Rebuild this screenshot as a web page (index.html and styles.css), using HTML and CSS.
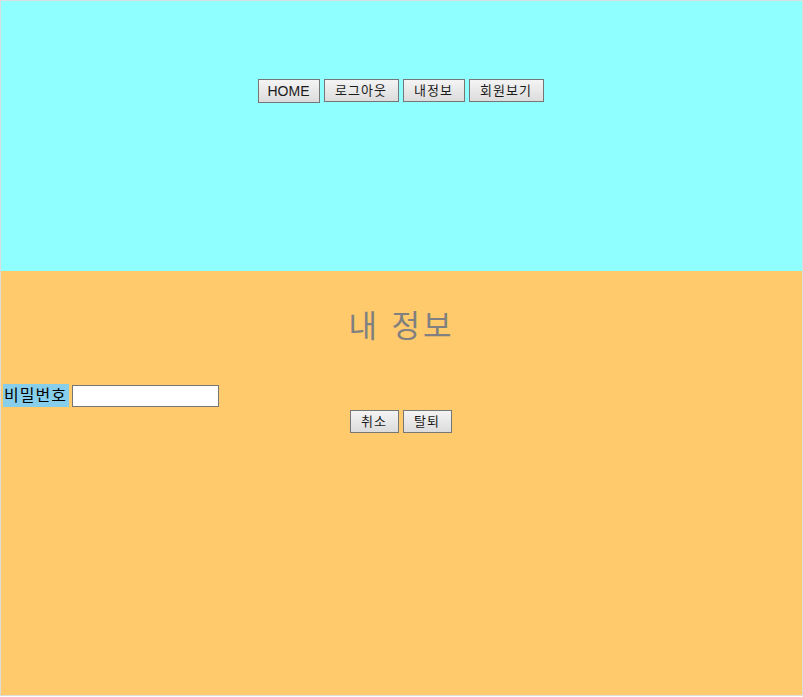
FILE: index.html
```html
<!DOCTYPE html>
<html lang="ko">
<head>
<meta charset="utf-8">
<link rel="stylesheet" href="styles.css">
</head>
<body>
<div class="frame">
  <header class="top">
    <nav class="menu">
      <button class="btn w3 home">HOME</button>
      <button class="btn w4">로그아웃</button>
      <button class="btn w3">내정보</button>
      <button class="btn w4">회원보기</button>
    </nav>
  </header>
  <main class="content">
    <h1 class="title">내 정보</h1>
    <div class="field">
      <label class="label">비밀번호</label>
      <input class="input" type="password">
    </div>
    <div class="actions">
      <button class="btn w2">취소</button>
      <button class="btn w2">탈퇴</button>
    </div>
  </main>
</div>
</body>
</html>
```
FILE: styles.css
```css
html, body {
  margin: 0;
  padding: 0;
  background: #ffffff;
}
body {
  font-family: "Liberation Sans", "Noto Sans CJK KR", sans-serif;
}
.frame {
  width: 801px;
  height: 694px;
  border: 1px solid #dcdcdc;
  display: flex;
  flex-direction: column;
}
.top {
  height: 270px;
  background: #8fffff;
  box-sizing: border-box;
  padding-top: 78px;
}
.menu {
  display: flex;
  justify-content: center;
  align-items: flex-start;
  gap: 4px;
  padding-right: 2px;
}
.btn {
  font-family: "Liberation Sans", "Noto Sans CJK KR", sans-serif;
  font-size: 13px;
  letter-spacing: 1px;
  color: #1a1a1a;
  height: 23px;
  padding: 0;
  border: 1px solid #767676;
  background: linear-gradient(#f4f4f4, #dcdcdc);
  line-height: 21px;
  margin: 0;
  box-sizing: border-box;
}
.w2 { width: 49px; }
.w3 { width: 62px; }
.w4 { width: 75px; }
.btn.home {
  height: 24px;
  font-size: 14px;
  letter-spacing: 0;
}
.content {
  flex: 1;
  background: #ffca6c;
}
.title {
  margin: 36px 0 0;
  text-align: center;
  font-size: 31px;
  font-weight: normal;
  color: #808080;
  line-height: 40px;
  letter-spacing: 3px;
}
.field {
  margin-top: 37px;
  padding-left: 2px;
  display: flex;
  align-items: center;
  gap: 3px;
}
.label {
  background: #87ceeb;
  font-size: 16px;
  letter-spacing: 1px;
  line-height: 23px;
  padding: 0 2px 0 1px;
}
.input {
  width: 147px;
  height: 22px;
  box-sizing: border-box;
  padding: 1px 2px;
  border: 1px solid #767676;
  margin: 0;
}
.actions {
  margin-top: 3px;
  display: flex;
  justify-content: center;
  gap: 4px;
  padding-right: 2px;
}
```
